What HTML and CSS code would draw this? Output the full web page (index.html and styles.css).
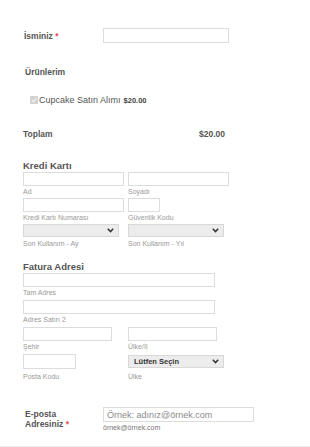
FILE: index.html
```
<!DOCTYPE html>
<html>
<head>
    <title>Sipariş Formu</title>
    <link rel="stylesheet" href="styles.css">
</head>
<body>
    <form class="order-form">
        <div class="line-row name-row">
            <label class="row-label" for="name">İsminiz <span class="req">*</span></label>
            <input type="text" id="name" class="text-input name-input">
        </div>

        <div class="section-title">Ürünlerim</div>
        <div class="product-row">
            <span class="check-box"><svg width="6" height="6" viewBox="0 0 6 6"><path d="M0.8 3.2 L2.4 4.7 L5.2 1.3" fill="none" stroke="#f4f4f4" stroke-width="1.2"/></svg></span>
            <span class="product-name">Cupcake Satın Alımı</span>
            <span class="product-price">$20.00</span>
        </div>

        <div class="total-row">
            <span class="total-label">Toplam</span>
            <span class="total-value">$20.00</span>
        </div>

        <div class="group-title">Kredi Kartı</div>
        <div class="field-grid">
            <div class="field">
                <input type="text" class="text-input w101">
                <span class="sub-label">Ad</span>
            </div>
            <div class="field">
                <input type="text" class="text-input w101">
                <span class="sub-label">Soyadı</span>
            </div>
            <div class="field">
                <input type="text" class="text-input w101">
                <span class="sub-label">Kredi Kartı Numarası</span>
            </div>
            <div class="field">
                <input type="text" class="text-input w32">
                <span class="sub-label">Güvenlik Kodu</span>
            </div>
            <div class="field">
                <div class="select-wrap w96">
                    <select class="select-input"><option></option></select>
                    <svg class="chevron" width="7" height="5" viewBox="0 0 7 5"><path d="M0.8 0.8 L3.5 3.6 L6.2 0.8" fill="none" stroke="#333" stroke-width="1.5"/></svg>
                </div>
                <span class="sub-label">Son Kullanım - Ay</span>
            </div>
            <div class="field">
                <div class="select-wrap w96">
                    <select class="select-input"><option></option></select>
                    <svg class="chevron" width="7" height="5" viewBox="0 0 7 5"><path d="M0.8 0.8 L3.5 3.6 L6.2 0.8" fill="none" stroke="#333" stroke-width="1.5"/></svg>
                </div>
                <span class="sub-label">Son Kullanım - Yıl</span>
            </div>
        </div>

        <div class="group-title billing-title">Fatura Adresi</div>
        <div class="field-grid">
            <div class="field full">
                <input type="text" class="text-input w192">
                <span class="sub-label">Tam Adres</span>
            </div>
            <div class="field full">
                <input type="text" class="text-input w192 gap-top">
                <span class="sub-label">Adres Satırı 2</span>
            </div>
            <div class="field">
                <input type="text" class="text-input w89 gap-top">
                <span class="sub-label">Şehir</span>
            </div>
            <div class="field">
                <input type="text" class="text-input w89 gap-top">
                <span class="sub-label">Ülke/İl</span>
            </div>
            <div class="field last">
                <input type="text" class="text-input w53 tall">
                <span class="sub-label">Posta Kodu</span>
            </div>
            <div class="field last">
                <div class="select-wrap w96 shift">
                    <select class="select-input chosen"><option>Lütfen Seçin</option></select>
                    <svg class="chevron" width="7" height="5" viewBox="0 0 7 5"><path d="M0.8 0.8 L3.5 3.6 L6.2 0.8" fill="none" stroke="#333" stroke-width="1.5"/></svg>
                </div>
                <span class="sub-label">Ülke</span>
            </div>
        </div>

        <div class="email-row">
            <label class="email-label" for="email">E-posta<br>Adresiniz <span class="req">*</span></label>
            <div class="field">
                <input type="text" id="email" class="text-input email-input" placeholder="Örnek: adınız@örnek.com">
                <span class="sub-label email-sub">örnek@örnek.com</span>
            </div>
        </div>
    </form>
    <div class="bottom-line"></div>
</body>
</html>
```

FILE: styles.css
```
body {
    margin: 0;
    font-family: 'Liberation Sans', Arial, sans-serif;
    background: #fff;
    color: #555;
    height: 447px;
    overflow: hidden;
}

.order-form {
    padding: 28px 0 0 23px;
    height: 418px;
}

.text-input {
    box-sizing: border-box;
    height: 14px;
    border: 1px solid #dcdcdc;
    background: #fff;
    margin: 0;
    padding: 0 3px;
    font-family: inherit;
    display: block;
}

.w101 { width: 101px; }
.w32 { width: 32px; }
.w96 { width: 96px; }
.w192 { width: 192px; }
.w89 { width: 89px; }
.w53 { width: 53px; }
.tall { height: 15px; }
.gap-top { margin-top: 1px; }

/* name */
.name-row {
    display: flex;
    align-items: center;
    height: 15px;
}

.row-label {
    width: 79px;
    padding-left: 1px;
    font-size: 8.5px;
    font-weight: bold;
    color: #555;
}

.req {
    color: #e8474b;
}

.name-input {
    width: 126px;
    height: 15px;
}

/* products */
.section-title {
    margin-top: 23px;
    padding-left: 2px;
    line-height: 12px;
    font-size: 8.5px;
    font-weight: bold;
    color: #555;
}

.product-row {
    margin-top: 16px;
    padding-left: 7px;
    height: 12px;
    display: flex;
    align-items: center;
}

.check-box {
    width: 8px;
    height: 8px;
    background: #d2d2d2;
    border-radius: 1px;
    display: flex;
    align-items: center;
    justify-content: center;
    margin-right: 1px;
}

.product-name {
    font-size: 9px;
    color: #555;
    margin-right: 3px;
}

.product-price {
    font-size: 7.5px;
    font-weight: bold;
    color: #444;
}

.total-row {
    margin-top: 22px;
    display: flex;
    line-height: 12px;
    font-size: 8.5px;
    font-weight: bold;
    color: #555;
}

.total-label {
    width: 176px;
}

/* grouped fields */
.group-title {
    margin-top: 20px;
    line-height: 12px;
    font-size: 9.5px;
    font-weight: bold;
    color: #555;
}

.billing-title {
    margin-top: 11px;
}

.field-grid {
    display: grid;
    grid-template-columns: 105px auto;
}

.field {
    display: flex;
    flex-direction: column;
    align-items: flex-start;
}

.field.full {
    grid-column: 1 / span 2;
}

.field.last {
    margin-top: 1px;
}

.field.last .sub-label {
    margin-top: 2px;
}

.sub-label {
    line-height: 12px;
    font-size: 7px;
    color: #999;
}

.select-wrap {
    position: relative;
    height: 13px;
    margin-bottom: 1px;
}

.select-wrap.shift {
    margin-top: 1px;
}

.select-input {
    -webkit-appearance: none;
    appearance: none;
    box-sizing: border-box;
    width: 100%;
    height: 13px;
    margin: 0;
    padding: 0 5px;
    border: 1px solid #d8d8d8;
    background: #ececec;
    font-family: inherit;
    font-size: 7.5px;
    color: #333;
    display: block;
}

.select-input.chosen {
    font-weight: bold;
}

.chevron {
    position: absolute;
    right: 5px;
    top: 4px;
}

/* email */
.email-row {
    margin-top: 24px;
    display: flex;
    align-items: flex-start;
}

.email-label {
    width: 78px;
    padding: 2px 0 0 2px;
    line-height: 10px;
    font-size: 8.5px;
    font-weight: bold;
    color: #555;
}

.email-input {
    width: 151px;
    height: 15px;
    font-size: 9px;
    color: #555;
}

.email-input::placeholder {
    color: #8a8a8a;
}

.email-sub {
    color: #777;
}

.bottom-line {
    height: 1px;
    background: #ececec;
}
```
